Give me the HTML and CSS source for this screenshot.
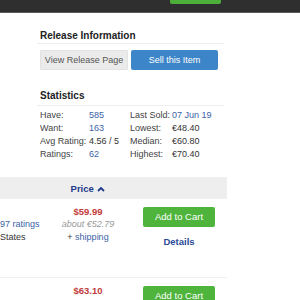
FILE: index.html
```html
<!DOCTYPE html>
<html>
<head>
<meta charset="utf-8">
<link rel="stylesheet" href="styles.css">
</head>
<body>
<header class="topbar">
  <span class="top-btn"></span>
</header>
<main class="info">
  <section class="block">
    <h3 class="block-title">Release Information</h3>
    <div class="btn-row">
      <a class="btn btn-light">View Release Page</a>
      <a class="btn btn-blue">Sell this Item</a>
    </div>
  </section>
  <section class="block stats-block">
    <h3 class="block-title">Statistics</h3>
    <div class="stats">
      <span class="lbl">Have:</span><a class="val link">585</a>
      <span class="lbl">Last Sold:</span><a class="val link">07 Jun 19</a>
      <span class="lbl">Want:</span><a class="val link">163</a>
      <span class="lbl">Lowest:</span><span class="val">€48.40</span>
      <span class="lbl">Avg Rating:</span><span class="val">4.56 / 5</span>
      <span class="lbl">Median:</span><span class="val">€60.80</span>
      <span class="lbl">Ratings:</span><a class="val link">62</a>
      <span class="lbl">Highest:</span><span class="val">€70.40</span>
    </div>
  </section>
</main>
<section class="table">
  <div class="thead">
    <span></span>
    <span class="th-price">Price
      <svg class="chev" width="8" height="6" viewBox="0 0 8 6"><path d="M1 5 L4 2 L7 5" fill="none" stroke="#1f3a8a" stroke-width="1.8"/></svg>
    </span>
    <span></span>
  </div>
  <div class="trow">
    <div class="desc">
      <span class="desc-line"></span>
      <a class="link">97 ratings</a>
      <span class="dark">States</span>
    </div>
    <div class="price">
      <span class="amount">$59.99</span>
      <span class="about">about €52.79</span>
      <span class="ship">+ <a class="link">shipping</a></span>
    </div>
    <div class="actions">
      <a class="cart">Add to Cart</a>
      <a class="details">Details</a>
    </div>
  </div>
  <div class="trow">
    <div class="desc"></div>
    <div class="price">
      <span class="amount">$63.10</span>
    </div>
    <div class="actions">
      <a class="cart">Add to Cart</a>
    </div>
  </div>
</section>
</body>
</html>
```
FILE: styles.css
```css
html, body {
  margin: 0;
  padding: 0;
  background: #fff;
  overflow: hidden;
  font-family: "Liberation Sans", Arial, sans-serif;
  font-size: 9px;
  color: #333;
}
.topbar {
  height: 12px;
  background: #2f2f2f;
  border-bottom: 1px solid #5a5a5a;
  display: flex;
  align-items: flex-start;
}
.top-btn {
  margin-left: 170px;
  width: 51px;
  height: 4px;
  background: #4caf3a;
  border-radius: 0 0 2px 2px;
}
.info {
  margin-left: 37px;
  width: 187px;
  padding-top: 17px;
}
.block-title {
  margin: 0;
  padding: 0 0 1px 3px;
  font-size: 10px;
  line-height: 12px;
  font-weight: bold;
  color: #222;
  border-bottom: 1px solid #eeeeee;
}
.btn-row {
  display: flex;
  gap: 3px;
  padding: 6px 0 0 3px;
}
.btn {
  height: 20px;
  line-height: 20px;
  font-size: 9px;
  border-radius: 2px;
  text-align: center;
}
.btn-light {
  width: 88px;
  background: #ebebeb;
  color: #555;
  box-shadow: inset 0 0 0 1px #e2e2e2;
}
.btn-blue {
  width: 87px;
  background: #3d85c9;
  color: #fff;
}
.stats-block {
  margin-top: 20px;
}
.stats-block .block-title {
  padding-bottom: 3px;
}
.stats {
  display: grid;
  grid-template-columns: 49px 41px 42px auto;
  padding: 3px 0 0 3px;
  line-height: 13px;
}
.lbl {
  color: #444;
}
.val {
  color: #333;
}
.link {
  color: #3c63a6;
}
.table {
  margin-top: 16px;
  width: 227px;
}
.thead {
  display: grid;
  grid-template-columns: 55px 66px 106px;
  height: 22px;
  background: #eeeeee;
  align-items: center;
}
.th-price {
  text-align: center;
  font-weight: bold;
  font-size: 9.5px;
  color: #1f3a8a;
}
.chev {
  vertical-align: 0px;
  margin-left: 1px;
}
.trow {
  display: grid;
  grid-template-columns: 55px 66px 106px;
  height: 78px;
  border-bottom: 1px solid #f0f0f0;
}
.desc {
  display: flex;
  flex-direction: column;
  padding-top: 6px;
  line-height: 13px;
  font-size: 9px;
  white-space: nowrap;
}
.desc-line {
  height: 13px;
}
.dark {
  color: #333;
}
.price {
  display: flex;
  flex-direction: column;
  align-items: center;
  padding-top: 6px;
  line-height: 13px;
}
.amount {
  font-weight: bold;
  color: #c23b3b;
  font-size: 9.5px;
}
.about {
  font-style: italic;
  color: #999;
}
.ship {
  color: #333;
}
.actions {
  display: flex;
  flex-direction: column;
  align-items: center;
  padding: 8px 0 0 10px;
}
.cart {
  width: 72px;
  height: 20px;
  line-height: 20px;
  text-align: center;
  background: #4fb43c;
  color: #fff;
  border-radius: 2px;
  font-size: 9.5px;
}
.details {
  margin-top: 9px;
  font-weight: bold;
  color: #2a4a98;
  font-size: 9.5px;
}
.trow + .trow {
  border-bottom: none;
}
```
